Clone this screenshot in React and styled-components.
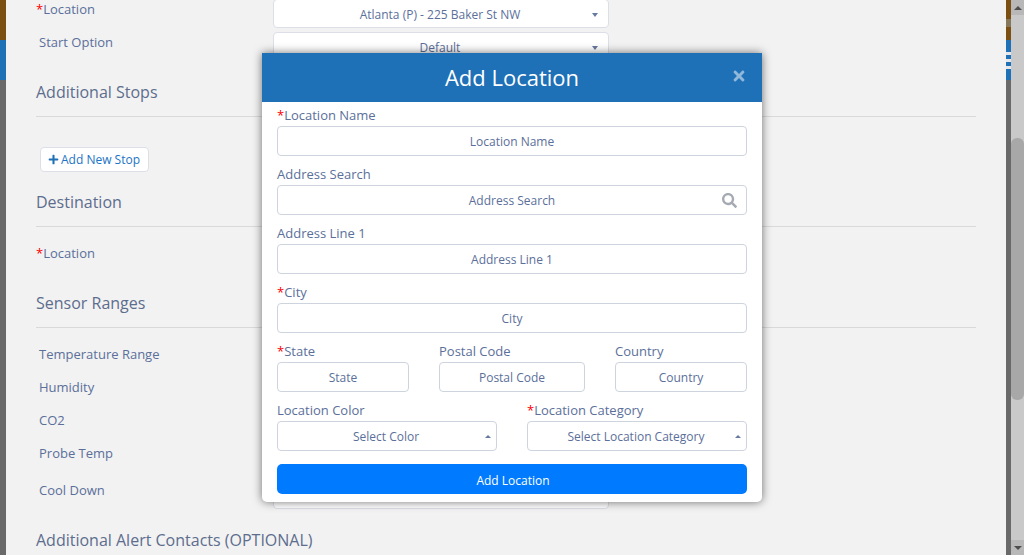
import React from 'react';
import styled, { createGlobalStyle } from 'styled-components';
import { FaPlus, FaSearch, FaTimes } from 'react-icons/fa';

const Global = createGlobalStyle`
    html, body {
        margin: 0;
        height: 100%;
        overflow: hidden;
        font-family: 'Open Sans', 'Liberation Sans', sans-serif;
        color: #5b6f9a;
    }
    * { box-sizing: border-box; }
`

const Page = styled.div`
    display: grid;
    grid-template-columns: 6px 1000px 5px 13px;
    width: 1024px;
    height: 555px;
    position: relative;
    overflow: hidden;
`

const Strip = styled.div`
    display: flex;
    flex-direction: column;
    background: #696969;
`
const Brown = styled.div`
    height: 40px;
    background: #7b4e12;
    padding-top: 19px;
`
const Notch = styled.div`
    height: 8px;
    background: #86765c;
`
const BlueBand = styled.div`
    height: 40px;
    background: #1e70b7;
    display: flex;
    flex-direction: column;
    gap: 4px;
    padding-top: 12px;
`
const Stripe = styled.div`
    height: 3px;
    background: #e4e8ec;
`

const Panel = styled.div`
    background: #f2f2f2;
    padding: 0 30px;
    overflow: hidden;
`
const Content = styled.div`
    margin-top: -1px;
`

const Row = styled.div`
    display: grid;
    grid-template-columns: 237px 336px;
    margin-bottom: ${p => p.$gap ?? 4}px;
`
const Label = styled.label`
    font-size: 13px;
    line-height: 20px;
    padding-left: ${p => p.$required ? 0 : 3}px;
`
const Star = styled.span`
    color: #f00;
`

const Select = styled.div`
    position: relative;
    height: 29px;
    background: #fff;
    border: 1px solid #dcdfe8;
    border-radius: 4px;
    display: flex;
    align-items: center;
    justify-content: center;
    font-size: 12px;
    padding: 2px 2px 0 0;
`
const Caret = styled.span`
    position: absolute;
    right: ${p => p.$up ? 5 : 10}px;
    top: 50%;
    margin-top: -1px;
    border-left: 3.5px solid transparent;
    border-right: 3.5px solid transparent;
    border-${p => p.$up ? 'bottom' : 'top'}: ${p => p.$up ? 3 : 4}px solid #66799f;
`

const SectionTitle = styled.h2`
    margin: ${p => p.$top ?? 19}px 0 ${p => p.$after ?? 16}px;
    padding-bottom: 12px;
    border-bottom: ${p => p.$plain ? 'none' : '1px solid #d9d9d9'};
    font-size: 16px;
    font-weight: 400;
    line-height: 24px;
    color: #5d6d8e;
`

const AddStop = styled.button`
    display: flex;
    align-items: center;
    gap: 2px;
    height: 25px;
    width: 109px;
    margin: 0 0 0 4px;
    padding: 0 0 0 7px;
    background: #fff;
    border: 1px solid #dcdfe8;
    border-radius: 4px;
    color: #1b74c5;
    font-family: inherit;
    font-size: 12px;
    svg { font-size: 11px; color: #1e70b7; }
`

const Scrollbar = styled.div`
    display: flex;
    flex-direction: column;
    background: #c9c9c9;
`
const ScrollButton = styled.div`
    height: 15px;
    background: #b8b8b8;
    display: flex;
    align-items: center;
    justify-content: center;
`
const ScrollArrow = styled.span`
    border-left: 4px solid transparent;
    border-right: 4px solid transparent;
    border-${p => p.$up ? 'bottom' : 'top'}: 4px solid #4d4d4d;
`
const ScrollTrack = styled.div`
    flex: 1;
    padding-top: 123px;
`
const ScrollThumb = styled.div`
    height: 262px;
    background: #a8a8a8;
    border-radius: 6px;
`

const Modal = styled.div`
    position: absolute;
    left: 262px;
    top: 53px;
    width: 500px;
    height: 449px;
    background: #fff;
    border-radius: 0 0 5px 5px;
    box-shadow: 0 0 10px rgba(0, 0, 0, .55);
`
const ModalHead = styled.div`
    position: relative;
    height: 49px;
    background: #1e70b7;
    color: #fff;
    display: flex;
    align-items: center;
    justify-content: center;
    font-size: 22px;
    padding-bottom: 2px;
`
const Close = styled.span`
    position: absolute;
    right: 15px;
    top: 15px;
    color: rgba(255, 255, 255, .5);
    font-size: 16px;
    line-height: 16px;
`
const ModalBody = styled.div`
    padding: 1px 15px 0;
`
const Field = styled.div`
    margin-bottom: 6px;
`
const FieldLabel = styled.div`
    font-size: 13px;
    line-height: 25px;
    height: 23px;
`
const InputWrap = styled.div`
    position: relative;
`
const Input = styled.input`
    display: block;
    width: 100%;
    height: 30px;
    border: 1px solid #ced4de;
    border-radius: 4px;
    background: #fff;
    text-align: center;
    font-family: inherit;
    font-size: 12px;
    color: #5b6f9a;
    outline: none;
    &::placeholder {
        color: #5b6f9a;
        opacity: 1;
    }
`
const SearchIcon = styled(FaSearch)`
    position: absolute;
    right: 10px;
    top: 8px;
    font-size: 15px;
    color: #a6abb3;
`
const Three = styled.div`
    display: grid;
    grid-template-columns: 132px 146px 132px;
    column-gap: 30px;
`
const Two = styled.div`
    display: grid;
    grid-template-columns: 220px 220px;
    column-gap: 30px;
`
const ModalSelect = styled(Select)`
    height: 30px;
    border-color: #ced4de;
    padding: 0 2px 0 0;
`
const Submit = styled.button`
    display: block;
    width: 100%;
    height: 30px;
    margin-top: 7px;
    padding: 3px 0 0 2px;
    border: none;
    border-radius: 5px;
    background: #007bff;
    color: #fff;
    font-family: inherit;
    font-size: 12px;
`

const Req = () => <Star>*</Star>

const PlainField = ({ label, required, children }) => (
    <Field>
        <FieldLabel>{required && <Req />}{label}</FieldLabel>
        {children || <Input placeholder={label} readOnly />}
    </Field>
)

const FormRow = ({ label, required, text, gap }) => (
    <Row $gap={gap}>
        <Label $required={required}>{required && <Req />}{label}</Label>
        <Select>{text}<Caret /></Select>
    </Row>
)

export default function App() {
    return (
        <Page>
            <Global />
            <Strip><Brown /><BlueBand /></Strip>
            <Panel>
                <Content>
                    <FormRow required label="Location" text="Atlanta (P) - 225 Baker St NW" />
                    <FormRow label="Start Option" text="Default" />
                    <SectionTitle $after={30}>Additional Stops</SectionTitle>
                    <AddStop><FaPlus /> Add New Stop</AddStop>
                    <SectionTitle $top={18}>Destination</SectionTitle>
                    <FormRow required label="Location" text="" />
                    <SectionTitle>Sensor Ranges</SectionTitle>
                    <FormRow label="Temperature Range" text="" />
                    <FormRow label="Humidity" text="" />
                    <FormRow label="CO2" text="" />
                    <FormRow label="Probe Temp" text="" gap={8} />
                    <FormRow label="Cool Down" text="" />
                    <SectionTitle $plain>Additional Alert Contacts (OPTIONAL)</SectionTitle>
                </Content>
            </Panel>
            <Strip>
                <Brown><Notch /></Brown>
                <BlueBand><Stripe /><Stripe /><Stripe /></BlueBand>
            </Strip>
            <Scrollbar>
                <ScrollButton><ScrollArrow $up /></ScrollButton>
                <ScrollTrack><ScrollThumb /></ScrollTrack>
                <ScrollButton><ScrollArrow /></ScrollButton>
            </Scrollbar>
            <Modal>
                <ModalHead>
                    Add Location
                    <Close><FaTimes /></Close>
                </ModalHead>
                <ModalBody>
                    <PlainField required label="Location Name" />
                    <PlainField label="Address Search">
                        <InputWrap>
                            <Input placeholder="Address Search" readOnly />
                            <SearchIcon />
                        </InputWrap>
                    </PlainField>
                    <PlainField label="Address Line 1" />
                    <PlainField required label="City" />
                    <Three>
                        <PlainField required label="State" />
                        <PlainField label="Postal Code" />
                        <PlainField label="Country" />
                    </Three>
                    <Two>
                        <PlainField label="Location Color">
                            <ModalSelect>Select Color<Caret $up /></ModalSelect>
                        </PlainField>
                        <PlainField required label="Location Category">
                            <ModalSelect>Select Location Category<Caret $up /></ModalSelect>
                        </PlainField>
                    </Two>
                    <Submit>Add Location</Submit>
                </ModalBody>
            </Modal>
        </Page>
    );
}
